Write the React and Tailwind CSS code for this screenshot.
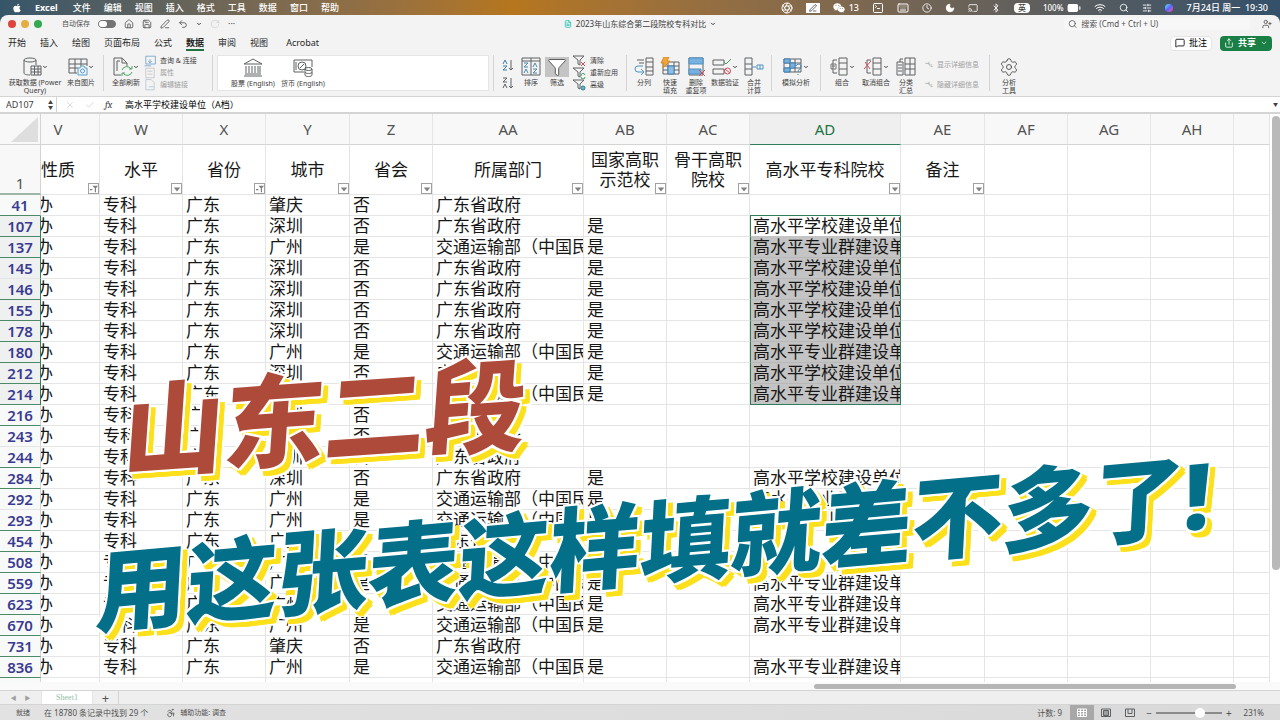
import { useState } from 'react';
import {
  Accessibility, Battery, Bluetooth, Cast, ChevronDown, Clock, FileText, Funnel, House, Keyboard,
  MessageSquare, Moon, PenLine, RotateCw, Save, Search, Share, SlidersHorizontal,
  SquareTerminal, Undo2, UserPlus, Wifi, X, Check, Settings, Landmark, Banknote, Aperture,
} from 'lucide-react';
import { FaApple, FaWeixin } from 'react-icons/fa';

const MENUS = ['文件', '编辑', '视图', '插入', '格式', '工具', '数据', '窗口', '帮助'];
const TABS = ['开始', '插入', '绘图', '页面布局', '公式', '数据', '审阅', '视图', 'Acrobat'];

const COLUMNS = [
  { id: 'V', title: '性质', width: 'w-[59px]', filter: 'active', clipped: true },
  { id: 'W', title: '水平', width: 'w-[83px]', filter: 'plain' },
  { id: 'X', title: '省份', width: 'w-[83px]', filter: 'active' },
  { id: 'Y', title: '城市', width: 'w-[84px]', filter: 'plain' },
  { id: 'Z', title: '省会', width: 'w-[83px]', filter: 'plain' },
  { id: 'AA', title: '所属部门', width: 'w-[151px]', filter: 'plain' },
  { id: 'AB', title: '国家高职示范校', width: 'w-[83px]', filter: 'plain' },
  { id: 'AC', title: '骨干高职院校', width: 'w-[83px]', filter: 'plain' },
  { id: 'AD', title: '高水平专科院校', width: 'w-[151px]', filter: 'plain' },
  { id: 'AE', title: '备注', width: 'w-[84px]', filter: 'plain' },
  { id: 'AF', title: '', width: 'w-[83px]' },
  { id: 'AG', title: '', width: 'w-[83px]' },
  { id: 'AH', title: '', width: 'w-[83px]' },
  { id: '', title: '', width: '' },
];

const PROVINCE = '广东省政府';
const MINISTRY = '交通运输部（中国民';
const SCHOOL = '高水平学校建设单位';
const MAJOR = '高水平专业群建设单';

// row number, city, capital, department, demo school, high-level school
const ROWS = [
  [41, '肇庆', '否', PROVINCE, '', ''],
  [107, '深圳', '否', PROVINCE, '是', SCHOOL],
  [137, '广州', '是', MINISTRY, '是', MAJOR],
  [145, '深圳', '否', PROVINCE, '是', SCHOOL],
  [146, '深圳', '否', PROVINCE, '是', SCHOOL],
  [155, '深圳', '否', PROVINCE, '是', SCHOOL],
  [178, '深圳', '否', PROVINCE, '是', SCHOOL],
  [180, '广州', '是', MINISTRY, '是', MAJOR],
  [212, '深圳', '否', PROVINCE, '是', SCHOOL],
  [214, '广州', '是', MINISTRY, '是', MAJOR],
  [216, '深圳', '否', PROVINCE, '', ''],
  [243, '深圳', '否', PROVINCE, '', ''],
  [244, '深圳', '否', PROVINCE, '', ''],
  [284, '深圳', '否', PROVINCE, '是', SCHOOL],
  [292, '广州', '是', MINISTRY, '是', MAJOR],
  [293, '广州', '是', MINISTRY, '是', MAJOR],
  [454, '广州', '否', PROVINCE, '', ''],
  [508, '广州', '是', MINISTRY, '', ''],
  [559, '广州', '是', MINISTRY, '是', MAJOR],
  [623, '广州', '是', MINISTRY, '是', MAJOR],
  [670, '广州', '是', MINISTRY, '是', MAJOR],
  [731, '肇庆', '否', PROVINCE, '', ''],
  [836, '广州', '是', MINISTRY, '是', MAJOR],
];

const Icon = ({ children, className = 'h-5 w-5' }) => (
  <svg viewBox="0 0 20 20" fill="none" stroke="#5f6163" strokeWidth="1" className={className} aria-hidden="true">
    {children}
  </svg>
);

const DatabaseIcon = () => (
  <Icon>
    <ellipse cx="8" cy="3" rx="6" ry="2" />
    <path d="M2 3v13c0 1 2 2 6 2M14 3v5" />
    <path d="M9 9h10v9H9zM9 12h10M12.5 9v9M16 9v9M9 15h10" />
  </Icon>
);

const PictureDataIcon = () => (
  <Icon>
    <path d="M1 2h18v7M1 2v14h8M1 7h18M1 11h9M7 2v14M13 2v7" />
    <path d="M10 11h2l1-2h3l1 2h2v7h-9z" stroke="#5b9fc4" fill="#eaf4fa" />
    <circle cx="14.500" cy="14" r="2" stroke="#5b9fc4" />
  </Icon>
);

const RefreshIcon = () => (
  <Icon>
    <path d="M8 18H1V1h8l5 5v3M9 1v5h5" />
    <path d="M4 14V4h3" />
    <path d="M9 13a5 5 0 0 1 9-1M19 9v3h-3M19 15a5 5 0 0 1-9 1M9 19v-3h3" stroke="#4aa564" />
  </Icon>
);

const StockIcon = () => (
  <Icon>
    <path d="M1 6l9-5 9 5zM3 8v7M6 8v7M9 8v7M12 8v7M15 8v7M17 8v7M2 16h16M1 18h18" />
  </Icon>
);

const CurrencyIcon = () => (
  <Icon>
    <path d="M11 14H1V2h18v7M3 4v8" />
    <circle cx="9" cy="8" r="4" />
    <path d="M7 10l4-4" />
    <ellipse cx="15.500" cy="11" rx="3.500" ry="1.500" fill="#fff" />
    <path d="M12 11v6c0 2 7 2 7 0v-6M12 14c0 2 7 2 7 0" />
  </Icon>
);

const SortIcon = ({ down }) => (
  <svg viewBox="0 0 12 12" fill="none" stroke="#5f6163" strokeWidth="1" className="h-3 w-3" aria-hidden="true">
    <path d={down ? 'M1 5l2-4 2 4M1 7h4l-4 4h4' : 'M1 1h4l-4 4h4M1 11l2-4 2 4'} stroke={down ? '#3f7fa8' : '#5f6163'} />
    <path d="M9 1v10M7 9l2 2 2-2" />
  </svg>
);

const SortTableIcon = () => (
  <Icon>
    <path d="M1 1h18v17H1zM1 4h18M10 1v17" />
    <path d="M3 6h4l-4 4h4M3 16l2-4 2 4M12 10l2-4 2 4M12 12h4l-4 4h4" stroke="#4c88aa" />
  </Icon>
);

const SmallFilter = ({ kind }) => (
  <svg viewBox="0 0 14 12" fill="none" stroke="#5f6163" strokeWidth="1" className="h-3 w-3.5" aria-hidden="true">
    <path d="M1 1h11L8 5v5l-2-1V5z" />
    {kind === 'clear' && <path d="M9 7l4 4M13 7l-4 4" stroke="#d0505c" />}
    {kind === 'again' && <path d="M9 9a2 2 0 0 1 4-1M13 10a2 2 0 0 1-4 0" stroke="#3d9b5c" />}
    {kind === 'more' && <circle cx="11" cy="9" r="2" stroke="#2c7f94" fill="#6eb4c4" />}
  </svg>
);

const SplitIcon = () => (
  <Icon>
    <path d="M12 1h7v17h-7zM12 5h7M12 10h7M12 14h7M3 3h7M5 6h5" />
    <path d="M9 9H4a3 3 0 0 0 0 6h5M7 12l3 3-3 3" stroke="#4c93bf" />
  </Icon>
);

const FlashIcon = () => (
  <Icon>
    <path d="M3 5h16v12H3zM3 9h16M3 13h16M8 5v12M14 5v12" />
    <path d="M8 9h6v8H8z" fill="#8dbfe6" stroke="#3f82b8" />
    <path d="M4 0h5L7 4h3l-7 7 1-5H1z" fill="#f1a63a" stroke="#d98a22" />
  </Icon>
);

const DedupeIcon = () => (
  <Icon>
    <path d="M3 1h14v17H3z" />
    <path d="M3 1h14v6H3zM3 12h12v5H3z" fill="#76b1df" stroke="#4f91c5" />
    <path d="M13 13l6 6M19 13l-6 6" stroke="#d0505c" />
  </Icon>
);

const ValidateIcon = () => (
  <Icon>
    <path d="M1 3h11v5H1zM1 12h11v5H1z" />
    <path d="M12 5l2 2 5-5" stroke="#3d9b5c" />
    <circle cx="15.500" cy="14" r="3" stroke="#d0505c" />
    <path d="M13 12l5 4" stroke="#d0505c" />
  </Icon>
);

const ConsolidateIcon = () => (
  <Icon>
    <path d="M1 1h7v6H1zM1 12h7v6H1zM1 7v5M8 7v5" />
    <path d="M8 10h4M13 8h6v4h-6zM16 8v4" stroke="#4c93bf" />
  </Icon>
);

const WhatIfIcon = () => (
  <Icon>
    <path d="M1 2h17v13H1zM1 6h17M1 11h17M7 2v13M12 2v13" />
    <path d="M1 2h6v4H1zM7 6h5v5H7zM1 11h6v4H1z" fill="#76b1df" stroke="#3f82b8" />
    <path d="M13 9c1-3 6-2 5 1 0 2-3 2-3 5M15 17v1" stroke="#3f82b8" />
  </Icon>
);

const GroupIcon = ({ off }) => (
  <Icon>
    <path d="M10 1h8v17h-8zM10 6h8M10 12h8M8 3H4v13h4" />
    {off ? <path d="M1 12l7-8M2 5l5 7" stroke="#d0505c" /> : <path d="M2 7h5v5H2zM3 9h3" stroke="#777" />}
  </Icon>
);

const SubtotalIcon = () => (
  <Icon>
    <path d="M9 1h10v17H9zM9 7h10M9 12h10M14 1v17M1 5h6v13H1zM2 8h4M2 11h4M2 14h4M7 2H4v3" />
  </Icon>
);

const Chevron = () => <ChevronDown className="h-1.5 w-1.5 shrink-0 text-neutral-700" strokeWidth={4} />;

const Tile = ({ icon, label, width, menu }) => (
  <button className={`flex flex-col items-center ${width}`}>
    <span className="flex h-6 items-center">
      {icon}
      {menu && <Chevron />}
    </span>
    <span className="whitespace-pre text-center text-[7px] leading-[8px]">{label}</span>
  </button>
);

const SmallCommand = ({ icon, label, disabled }) => (
  <button disabled={disabled} className="flex items-center gap-1 whitespace-nowrap text-[7px] leading-3 disabled:text-neutral-400">
    {icon}
    {label}
  </button>
);

const Divider = () => <div className="mx-1 h-9 w-px shrink-0 bg-neutral-300" />;

const MenuBar = () => (
  <nav className="flex h-[15px] shrink-0 items-center justify-between pl-3 pr-3 text-[9px] font-medium leading-3 text-white">
    <div className="flex items-center gap-[13px]">
      <FaApple className="h-2.5 w-2.5" />
      <span className="font-bold">Excel</span>
      <div className="flex gap-[13px] pl-0.5">
        {MENUS.map(name => <button key={name}>{name}</button>)}
      </div>
    </div>
    <div className="flex items-center gap-[13px]">
      <Aperture className="h-3 w-3" />
      <span className="flex h-2.5 w-3.5 items-center justify-center bg-white">
        <PenLine className="h-2 w-2 text-neutral-800" />
      </span>
      <span className="flex items-center gap-1"><FaWeixin className="h-3 w-3" />13</span>
      <SquareTerminal className="h-3 w-3" />
      <Keyboard className="h-3 w-3" />
      <Clock className="h-2.5 w-2.5" />
      <Moon className="h-2.5 w-2.5 fill-white" />
      <Cast className="h-2.5 w-2.5" />
      <Bluetooth className="h-2.5 w-2.5" />
      <span className="flex h-2.5 w-4 items-center justify-center rounded-sm bg-white text-[8px] text-neutral-700">英</span>
      <span className="flex items-center gap-1 text-[8px]">100%<Battery className="h-3.5 w-3.5 fill-white" /></span>
      <Wifi className="h-3 w-3" />
      <Search className="h-2.5 w-2.5" />
      <SlidersHorizontal className="h-2.5 w-2.5" />
      <span className="h-2 w-2 rounded-full bg-linear-to-br from-cyan-300 via-indigo-500 to-pink-500" />
      <span>7月24日 周一&nbsp;&nbsp;19:30</span>
    </div>
  </nav>
);

const TitleBar = () => (
  <header className="grid h-[18px] shrink-0 grid-cols-3 items-center px-2 text-neutral-600">
    <div className="flex items-center gap-2">
      <div className="flex gap-[5px]">
        <button aria-label="关闭" className="h-2 w-2 rounded-full bg-[#e0443e]" />
        <button aria-label="最小化" className="h-2 w-2 rounded-full bg-[#e5ad3f]" />
        <button aria-label="缩放" className="h-2 w-2 rounded-full bg-[#34a853]" />
      </div>
      <span className="ml-3 text-[7px] leading-3">自动保存</span>
      <button role="switch" aria-checked="false" aria-label="自动保存" className="flex h-2 w-[18px] rounded-full border border-neutral-500 bg-neutral-500">
        <span className="h-full w-2 rounded-full bg-white" />
      </button>
      <House className="h-2.5 w-2.5" />
      <Save className="h-2.5 w-2.5" />
      <PenLine className="h-2.5 w-2.5" />
      <Undo2 className="h-2.5 w-2.5" />
      <Chevron />
      <RotateCw className="h-2.5 w-2.5 text-neutral-300" />
      <span className="text-[9px] leading-3">···</span>
    </div>
    <div className="flex items-center justify-center gap-1 text-[8px] leading-3 text-neutral-700">
      <FileText className="h-2 w-2 text-teal-500" />
      2023年山东综合第二段院校专科对比
      <Chevron />
    </div>
    <div className="flex items-center justify-end gap-3">
      <label className="flex h-3 w-[186px] items-center gap-1 rounded-sm bg-[#f7f7f7] pl-1">
        <Search className="h-2.5 w-2.5" />
        <input placeholder="搜索 (Cmd + Ctrl + U)" className="w-full bg-transparent text-[8px] leading-3 outline-none placeholder:text-neutral-600" />
      </label>
      <UserPlus className="h-2.5 w-2.5" />
    </div>
  </header>
);

const RibbonTabs = ({ active, onSelect }) => (
  <div className="flex h-5 shrink-0 items-center justify-between pl-2 pr-2">
    <div className="flex items-center gap-[14px] pt-0.5 text-[9px] leading-3 text-neutral-800">
      {TABS.map((name, i) => (
        <button
          key={`${name}-${i}`}
          onClick={() => onSelect(i)}
          className={`border-b-2 ${active === i ? 'border-[#217346] font-bold' : 'border-transparent'} ${name === 'Acrobat' ? 'ml-1' : ''}`}
        >
          {name}
        </button>
      ))}
    </div>
    <div className="flex items-center gap-2 text-[9px] leading-3">
      <button className="flex h-[15px] items-center gap-1 rounded border border-neutral-200 bg-white px-1">
        <MessageSquare className="h-2.5 w-2.5" />批注
      </button>
      <button className="flex h-[15px] items-center gap-1 rounded bg-[#1a7f45] px-1 font-bold text-white">
        <Share className="h-2.5 w-2.5" />共享
        <ChevronDown className="h-2 w-2" />
      </button>
    </div>
  </div>
);

const Ribbon = () => (
  <div className="flex h-11 shrink-0 items-start border-b border-neutral-300 pl-[7px] pt-0.5 text-neutral-700">
    <Tile width="w-14" icon={<DatabaseIcon />} menu label={'获取数据 (Power\nQuery)'} />
    <Tile width="w-9" icon={<PictureDataIcon />} menu label="来自图片" />
    <Divider />
    <Tile width="w-9" icon={<RefreshIcon />} menu label="全部刷新" />
    <div className="flex w-16 flex-col">
      <SmallCommand icon={<Icon className="h-3 w-3"><path d="M3 2h16v13H3zM1 18h11M10 7v6M7 10l3 3 3-3" stroke="#3f82b8" /></Icon>} label="查询 & 连接" />
      <SmallCommand disabled icon={<Icon className="h-3 w-3"><path d="M3 2h14v16H3zM6 7h8M6 12h8" stroke="#b0b0b0" /></Icon>} label="属性" />
      <SmallCommand disabled icon={<Icon className="h-3 w-3"><path d="M3 1h9l5 5v12H3zM8 13h8" stroke="#9bb5c8" /></Icon>} label="编辑链接" />
    </div>
    <Divider />
    <div className="flex h-9 w-[272px] shrink-0 border border-neutral-200 bg-white pl-2">
      <Tile width="w-[54px]" icon={<StockIcon />} label="股票 (English)" />
      <Tile width="w-[46px]" icon={<CurrencyIcon />} label="货币 (English)" />
    </div>
    <Divider />
    <div className="flex w-5 flex-col items-center gap-1.5 pt-1">
      <button aria-label="升序"><SortIcon down /></button>
      <button aria-label="降序"><SortIcon /></button>
    </div>
    <Tile width="w-[26px]" icon={<SortTableIcon />} label="排序" />
    <Tile width="w-[26px]" icon={<span className="bg-[#c4c4c4] px-0.5"><Funnel className="h-5 w-5 fill-white" strokeWidth={1} /></span>} label="筛选" />
    <div className="flex w-[52px] flex-col pl-0.5">
      <SmallCommand icon={<SmallFilter kind="clear" />} label="清除" />
      <SmallCommand icon={<SmallFilter kind="again" />} label="重新应用" />
      <SmallCommand icon={<SmallFilter kind="more" />} label="高级" />
    </div>
    <Divider />
    <Tile width="w-[26px]" icon={<SplitIcon />} label="分列" />
    <Tile width="w-[26px]" icon={<FlashIcon />} label={'快速\n填充'} />
    <Tile width="w-[26px]" icon={<DedupeIcon />} label={'删除\n重复项'} />
    <Tile width="w-8" icon={<ValidateIcon />} menu label="数据验证" />
    <Tile width="w-[26px]" icon={<ConsolidateIcon />} label={'合并\n计算'} />
    <Divider />
    <Tile width="w-10" icon={<WhatIfIcon />} menu label="模拟分析" />
    <Divider />
    <Tile width="w-[34px]" icon={<GroupIcon />} menu label="组合" />
    <Tile width="w-[34px]" icon={<GroupIcon off />} menu label="取消组合" />
    <Tile width="w-[26px]" icon={<SubtotalIcon />} label={'分类\n汇总'} />
    <div className="flex w-[66px] flex-col gap-2 pl-1.5 pt-1">
      <SmallCommand disabled icon={<Icon className="h-2 w-2"><path d="M1 6h9M10 2v8h8M14 14h5" stroke="#aaa" strokeWidth="2" /></Icon>} label="显示详细信息" />
      <SmallCommand disabled icon={<Icon className="h-2 w-2"><path d="M1 6h9M10 2v8h8M14 14h5" stroke="#aaa" strokeWidth="2" /></Icon>} label="隐藏详细信息" />
    </div>
    <Divider />
    <Tile width="w-[30px]" icon={<Settings className="h-5 w-5" strokeWidth={1} />} label={'分析\n工具'} />
  </div>
);

const FormulaBar = () => (
  <div className="flex h-[17px] shrink-0 items-center border-b-2 border-neutral-300 bg-white text-neutral-700">
    <input aria-label="名称框" defaultValue="AD107" className="w-12 pl-1.5 text-[9px] leading-3 outline-none" />
    <span className="flex h-full w-[9px] flex-col justify-center border-r border-neutral-300 text-[5px] leading-[5px]">
      <span>▲</span>
      <span>▼</span>
    </span>
    <X className="ml-2 h-2.5 w-2.5 text-neutral-300" />
    <Check className="ml-2.5 h-2.5 w-2.5 text-neutral-300" />
    <span className="ml-2.5 w-5 font-serif text-[10px] italic leading-3">fx</span>
    <input aria-label="编辑栏" defaultValue="高水平学校建设单位（A档）" className="flex-1 text-[9px] leading-3 text-black outline-none" />
    <span className="px-0.5 text-[5px]">▼</span>
  </div>
);

const FilterButton = ({ kind }) => (
  <button aria-label="筛选" className="absolute bottom-0 right-0 flex h-[11px] w-[11px] items-center justify-center border border-neutral-400 bg-white">
    <svg viewBox="0 0 10 10" className="h-2 w-2" fill="#808080">
      {kind === 'active' ? <path d="M0 5h3v1.500H0zM3 1h7L7.500 4v5H6V4z" /> : <path d="M1 3h8L5 8z" />}
    </svg>
  </button>
);

const gapAfter = (index) => !ROWS[index + 1] || ROWS[index + 1][0] - ROWS[index][0] > 1;

const Sheet = () => (
  <div className="relative min-h-0 flex-1 overflow-hidden bg-white pr-2.5">
    <table className="w-full table-fixed border-separate border-spacing-0 text-[17px] leading-5 text-neutral-900">
      <thead>
        <tr className="h-[31px] bg-[#f8f8f8] text-[15px] text-neutral-600">
          <th aria-label="全选" className="w-[41px] border-b border-r border-neutral-300 p-0">
            <svg viewBox="0 0 40 30" className="block h-[30px] w-full" fill="#dedede"><path d="M38 3v25H11z" /></svg>
          </th>
          {COLUMNS.map(col => (
            <th
              key={col.id || 'rest'}
              className={`border-b border-r p-0 font-normal ${col.width} ${
                col.id === 'AD'
                  ? 'border-b-[#2f7d5b] border-r-neutral-200 bg-[#efefef] text-[#217346]'
                  : 'border-b-neutral-300 border-r-neutral-200'
              }`}
            >
              <div className={col.clipped ? '-ml-6' : ''}>{col.id}</div>
            </th>
          ))}
        </tr>
      </thead>
      <tbody>
        <tr className="h-[50px]">
          <th className="border-b-2 border-r border-b-[#9fb5a5] border-r-neutral-300 bg-[#f8f8f8] p-0 align-bottom text-[15px] font-normal text-neutral-600">1</th>
          {COLUMNS.map(col => (
            <td key={col.id || 'rest'} className="relative overflow-hidden border-b border-r border-neutral-200 p-0 text-center">
              <div className={col.clipped ? '-ml-6' : 'px-[7px]'}>{col.title}</div>
              {col.filter && <FilterButton kind={col.filter} />}
            </td>
          ))}
        </tr>
        {ROWS.map(([num, city, capital, dept, demo, level], i) => {
          const selected = num >= 107 && num <= 214;
          const values = ['公办', '专科', '广东', city, capital, dept, demo, '', level, '', '', '', '', ''];
          return (
            <tr key={num} className="h-[21px]">
              <th
                className={`border-b border-r p-0 text-[15px] font-semibold text-[#3a3a92] ${
                  gapAfter(i) ? 'border-b-[#4c8a67]' : 'border-b-neutral-200'
                } ${selected ? 'border-r-[#2f7d5b] bg-[#eef1f0]' : 'border-r-neutral-300 bg-[#f8faf9]'}`}
              >
                {num}
              </th>
              {values.map((value, c) => {
                const inRange = selected && c === 8;
                let cls = 'border-neutral-200';
                if (inRange) {
                  cls = `border-l border-l-[#2f7d5b] border-r-[#2f7d5b] ${num === 107 ? 'border-b-[#c4c4c4]' : 'bg-[#c4c4c4]'} ${num === 214 ? 'border-b-[#2f7d5b]' : 'border-b-[#b8b8b8]'}`;
                } else if (num === 41 && c === 8) {
                  cls = 'border-r-neutral-200 border-b-[#2f7d5b]';
                }
                return (
                  <td key={c} className={`overflow-hidden whitespace-nowrap border-b border-r p-0 ${cls}`}>
                    <div className={`h-5 ${c === 0 ? '-ml-6 pl-0.5' : inRange ? 'pl-0.5' : 'pl-[3px]'}`}>{value}</div>
                  </td>
                );
              })}
            </tr>
          );
        })}
        <tr className="h-[21px]">
          <th className="border-r border-neutral-300 bg-[#f8faf9]" />
          {COLUMNS.map(col => <td key={col.id || 'rest'} className="border-r border-neutral-200" />)}
        </tr>
      </tbody>
    </table>
    <div className="absolute right-0 top-0.5 h-4/5 w-2 rounded-full bg-[#b9b9b9]" />
  </div>
);

const Footer = () => (
  <footer className="shrink-0 text-[7px] leading-3 text-neutral-600">
    <div className="flex h-[9px] items-center border-b border-neutral-300 bg-[#fafafa]">
      <div className="ml-auto mr-11 h-[5px] w-[33%] rounded-full bg-[#b5b5b5]" />
    </div>
    <div className="flex h-[14px] items-center border-b border-neutral-300 bg-[#efefef]">
      <div className="flex w-[41px] justify-center gap-2 text-[6px] text-neutral-400"><span>◀</span><span>▶</span></div>
      <button className="h-full w-[52px] border-x border-neutral-200 bg-white font-['Liberation_Serif',serif] text-[8px] text-[#8fc0a5]">Sheet1</button>
      <button aria-label="新建工作表" className="h-full w-[26px] border-r border-neutral-300 text-[13px]">+</button>
    </div>
    <div className="flex h-[15px] items-center justify-between bg-linear-to-r from-[#e2e2e2] to-[#d9d9d9] pl-4 pr-4">
      <div className="flex items-center gap-3.5">
        <span>就绪</span>
        <span className="text-[8px]">在 18780 条记录中找到 29 个</span>
        <span className="flex items-center gap-1 pl-1"><Accessibility className="h-2.5 w-2.5" />辅助功能: 调查</span>
      </div>
      <div className="flex h-full items-center">
        <span className="mr-2 text-[8px]">计数: 9</span>
        <button aria-label="普通" className="flex h-full w-6 items-center justify-center bg-[#a8a8a8]">
          <Icon className="h-2.5 w-2.5"><path d="M1 2h18v15H1zM1 7h18M1 12h18M7 2v15M13 2v15" stroke="#fff" strokeWidth="2" /></Icon>
        </button>
        <button aria-label="页面布局" className="flex w-6 justify-center">
          <Icon className="h-2.5 w-2.5"><path d="M1 2h18v15H1zM5 5h10v10H5zM5 8h10M5 12h10" strokeWidth="2" /></Icon>
        </button>
        <button aria-label="分页预览" className="flex w-6 justify-center">
          <Icon className="h-2.5 w-2.5"><path d="M1 2h18v15H1zM6 2v9h8V2" strokeWidth="2" /></Icon>
        </button>
        <span className="ml-1 text-[10px]">−</span>
        <label className="mx-1 flex items-center">
          <input
            type="range"
            aria-label="缩放比例"
            defaultValue="70"
            className="h-0.5 w-[66px] appearance-none bg-[#8b8b8b] [&::-webkit-slider-thumb]:h-2.5 [&::-webkit-slider-thumb]:w-2.5 [&::-webkit-slider-thumb]:appearance-none [&::-webkit-slider-thumb]:rounded-full [&::-webkit-slider-thumb]:bg-white"
          />
        </label>
        <span className="text-[10px]">+</span>
        <span className="ml-3 text-[8px]">231%</span>
      </div>
    </div>
  </footer>
);

// white rim around the letters, then a yellow drop edge below and to the right
const Caption = () => (
  <div className="pointer-events-none absolute inset-0 overflow-hidden whitespace-nowrap font-black leading-none [text-shadow:2px_0_0_white,-2px_0_0_white,0_2px_0_white,0_-2px_0_white,2px_2px_0_white,-2px_-2px_0_white,2px_-2px_0_white,-2px_2px_0_white,4px_4px_0_#fce01c,7px_7px_0_#fce01c,7px_4px_0_#fce01c,4px_7px_0_#fce01c,9px_9px_0_white,9px_4px_0_white,4px_9px_0_white]">
    <p className="absolute left-[120px] top-[381px] origin-bottom-left -rotate-4 -skew-x-8 text-[101px] text-[#ae4a3a]">山东二段</p>
    <p className="absolute left-[94px] top-[546px] origin-bottom-left -rotate-5 -skew-x-8 text-[91px] text-[#036f88]">用这张表这样填就差不多了!</p>
  </div>
);

const App = () => {
  const [tab, setTab] = useState(5);

  return (
    <div className="relative flex h-screen flex-col overflow-hidden bg-linear-to-r from-[#35566a] via-[#b5761d] via-40% to-[#34506a] font-['Noto_Sans','Noto_Sans_CJK_SC',sans-serif]">
      <MenuBar />
      <main className="flex min-h-0 flex-1 flex-col overflow-hidden rounded-t-lg bg-[#f3f3f3]">
        <TitleBar />
        <RibbonTabs active={tab} onSelect={setTab} />
        <Ribbon />
        <FormulaBar />
        <Sheet />
        <Footer />
      </main>
      <Caption />
    </div>
  );
};

export default App;
